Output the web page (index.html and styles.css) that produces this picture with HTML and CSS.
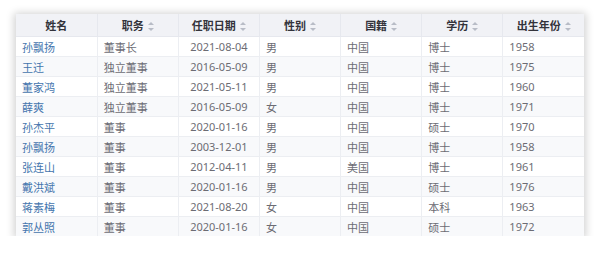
FILE: index.html
```html
<!DOCTYPE html>
<html lang="zh-CN">

<head>
    <meta charset="UTF-8">
    <meta name="viewport" content="width=device-width, initial-scale=1.0">
    <title>董事会成员</title>
    <link rel="stylesheet" href="styles.css">
</head>

<body>
    <div class="card">
        <table class="board-table">
            <thead>
                <tr>
                    <th>姓名</th>
                    <th>职务<span class="sort"></span></th>
                    <th>任职日期<span class="sort"></span></th>
                    <th>性别<span class="sort"></span></th>
                    <th>国籍<span class="sort"></span></th>
                    <th>学历<span class="sort"></span></th>
                    <th>出生年份<span class="sort"></span></th>
                </tr>
            </thead>
            <tbody id="rows"></tbody>
        </table>
    </div>

    <script>
        const members = [
            ['孙飘扬', '董事长', '2021-08-04', '男', '中国', '博士', '1958'],
            ['王迁', '独立董事', '2016-05-09', '男', '中国', '博士', '1975'],
            ['董家鸿', '独立董事', '2021-05-11', '男', '中国', '博士', '1960'],
            ['薛爽', '独立董事', '2016-05-09', '女', '中国', '博士', '1971'],
            ['孙杰平', '董事', '2020-01-16', '男', '中国', '硕士', '1970'],
            ['孙飘扬', '董事', '2003-12-01', '男', '中国', '博士', '1958'],
            ['张连山', '董事', '2012-04-11', '男', '美国', '博士', '1961'],
            ['戴洪斌', '董事', '2020-01-16', '男', '中国', '硕士', '1976'],
            ['蒋素梅', '董事', '2021-08-20', '女', '中国', '本科', '1963'],
            ['郭丛照', '董事', '2020-01-16', '女', '中国', '硕士', '1972']
        ];

        const tbody = document.getElementById('rows');
        members.forEach(member => {
            const tr = document.createElement('tr');
            member.forEach((value, i) => {
                const td = document.createElement('td');
                if (i === 0) {
                    const link = document.createElement('a');
                    link.href = '#';
                    link.textContent = value;
                    td.appendChild(link);
                } else {
                    td.textContent = value;
                }
                if (i === 2) {
                    td.className = 'date';
                }
                tr.appendChild(td);
            });
            tbody.appendChild(tr);
        });
    </script>
</body>

</html>
```

FILE: styles.css
```css
body {
    margin: 0;
    padding: 14px 16px 0;
    background: #ffffff;
    font-family: "Noto Sans", "Noto Sans CJK SC", sans-serif;
}

.card {
    width: 568px;
    background: #ffffff;
    box-shadow: 0 1px 8px 2px rgba(0, 0, 0, 0.18);
}

.board-table {
    width: 100%;
    border-collapse: collapse;
    table-layout: fixed;
    font-size: 11px;
}

.board-table th {
    height: 22px;
    padding: 0;
    background: #f1f2f6;
    color: #33333b;
    font-weight: bold;
    text-align: center;
    border-right: 1px solid #e6e8ee;
    border-bottom: 1px solid #e6e8ee;
}

.board-table td {
    height: 19px;
    padding: 0 6px;
    color: #6c6c74;
    border-right: 1px solid #eceef2;
    border-bottom: 1px solid #eceef2;
    white-space: nowrap;
}

.board-table td.date {
    text-align: center;
}

.board-table th:last-child,
.board-table td:last-child {
    border-right: none;
}

.board-table tbody tr:nth-child(even) td {
    background: #f8f9fb;
}

.board-table tbody tr:last-child td {
    border-bottom: none;
}

.board-table a {
    color: #4475ad;
    text-decoration: none;
}

.sort {
    display: inline-block;
    position: relative;
    width: 6px;
    height: 9px;
    margin-left: 4px;
    vertical-align: -1px;
}

.sort::before,
.sort::after {
    content: "";
    position: absolute;
    left: 0;
    border-left: 3px solid transparent;
    border-right: 3px solid transparent;
}

.sort::before {
    top: 0;
    border-bottom: 3.5px solid #b8bcc6;
}

.sort::after {
    bottom: 0;
    border-top: 3.5px solid #b8bcc6;
}
```
